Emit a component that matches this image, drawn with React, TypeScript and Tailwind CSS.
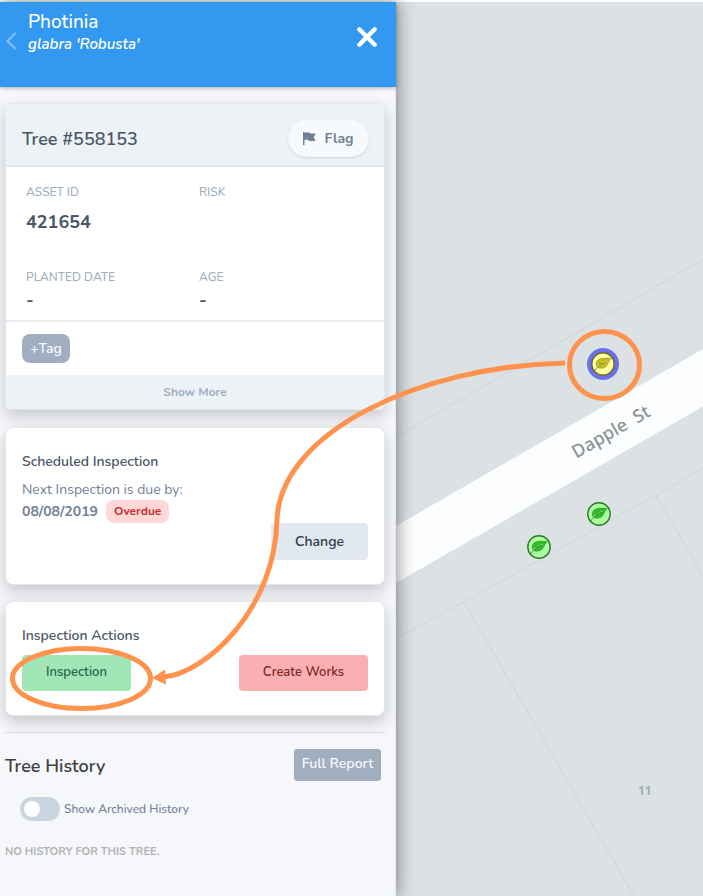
import React from "react";

interface FieldProps {
  label: string;
  value?: string;
  compact?: boolean;
}

const Field = ({ label, value, compact }: FieldProps) => (
  <div className="h-[85px]">
    <dt className="text-[12px] leading-[18px] font-medium text-[#a0aec0]">{label}</dt>
    <dd className={`text-[18px] leading-6 font-bold text-[#4a5568] ${compact ? "mt-0.5" : "mt-[9px]"}`}>{value}</dd>
  </div>
);

interface TreeMarkerProps {
  label: string;
  className: string;
  fill: string;
  stroke: string;
  leaf: string;
  selected?: boolean;
}

const TreeMarker = ({ label, className, fill, stroke, leaf, selected }: TreeMarkerProps) => (
  <button aria-label={label} className={`absolute cursor-pointer ${className}`}>
    <svg width="34" height="34" viewBox="-17 -17 34 34">
      {selected && <circle r="16" fill="#6b70ee" />}
      <circle r="11.2" fill={fill} stroke={stroke} strokeWidth="1.4" />
      <path d="M8.6 -5.8C5 -5.4 1 -6.6 -3 -5.2C-6.4 -3.8 -7.6 -0.8 -6.6 2.6C-5 0.6 -3.6 -0.4 -2 -1.2C-4 0.8 -5 2 -5.4 3.4C-3.6 4.8 0.6 4.8 3 2.6C5.4 0.4 5.4 -3.4 8.6 -5.8Z" fill={leaf} stroke={stroke} strokeOpacity="0.5" strokeWidth="0.6" />
      <path d="M-5.6 3C-3 0 0 -1.6 4 -2.8" fill="none" stroke={fill} strokeOpacity="0.8" strokeWidth="0.8" />
      <path d="M-8.4 7.6C-7.4 5.4 -6 3.4 -4.2 1.8C-2.4 0.2 0 -1 3 -1.8" fill="none" stroke={stroke} strokeOpacity="0.8" strokeWidth="0.9" />
    </svg>
  </button>
);

const TreeMap = () => (
  <section aria-label="Map" className="relative min-w-0 flex-1 overflow-hidden bg-[#dce1e4]">
    <svg className="absolute inset-0 h-full w-full" aria-hidden="true">
      <g transform="translate(-396 -2)">
        <path d="M396 526L996 180V238L396 583Z" fill="#fcfdfe" />
        <g fill="none" stroke="#d2d8db" strokeWidth="1.3">
          <path d="M396 437L996 90" />
          <path d="M396 638L464 602L656 495L996 302" />
          <path d="M464 602L634 896L752 1100" />
          <path d="M656 495L956 1015" />
        </g>
      </g>
    </svg>
    <span className="absolute top-[417px] left-[171px] -rotate-30 font-['Noto_Sans'] text-[18px] leading-6 font-medium whitespace-pre text-[#8b9395]">
      Dapple  St
    </span>
    <span className="absolute top-[781px] left-[242px] font-['Noto_Sans'] text-[12px] leading-4 font-bold text-[#9fb0b5]">
      11
    </span>
    <TreeMarker label="Tree 558153" className="top-[345px] left-[190px]" fill="#ffffa6" stroke="#6c6a1c" leaf="#c0bb1e" selected />
    <TreeMarker label="Tree" className="top-[495px] left-[186px]" fill="#adffa4" stroke="#2b7a2b" leaf="#2dbb26" />
    <TreeMarker label="Tree" className="top-[528px] left-[126px]" fill="#adffa4" stroke="#2b7a2b" leaf="#2dbb26" />
  </section>
);

const Guide = () => (
  <svg className="pointer-events-none absolute inset-0 z-20 h-full w-full" aria-hidden="true">
    <g fill="none" stroke="#ff924c" strokeWidth="5">
      <ellipse cx="604.5" cy="365" rx="35" ry="33.5" />
      <ellipse cx="81.5" cy="678.5" rx="69" ry="30" />
      <path d="M565 363C420 366 280 432 277 520C275 610 205 674 163 677" />
    </g>
    <path d="M152 678L165 669.5L166 684.5Z" fill="#ff924c" />
  </svg>
);

const App = () => {
  return (
    <main className="relative flex min-h-screen bg-white pt-0.5 font-['Nunito','Lato',sans-serif]">
      <aside className="relative z-10 w-[396px] shrink-0 border-r border-[#e8ebee] bg-[#f5f7fa] shadow-[2px_0_16px_rgba(0,0,0,0.4)]">
        {/* Header */}
        <header className="-mr-px flex h-[85px] items-start bg-[#3298f0] pr-[18px] pl-[5px] text-white shadow-[0_1px_4px_rgba(0,0,0,0.3)]">
          <button aria-label="Back" className="mt-[29px] w-[23px] cursor-pointer">
            <svg width="12" height="20" viewBox="0 0 12 20" fill="none" stroke="#7dbcf5" strokeWidth="2.4">
              <path d="M10.5 2L2.5 10L10.5 18" />
            </svg>
          </button>
          <div className="flex-1 pt-2">
            <h1 className="text-[19px] leading-6 font-medium">Photinia</h1>
            <p className="text-[15px] leading-5 font-semibold italic">glabra 'Robusta'</p>
          </div>
          <button aria-label="Close" className="mt-6 cursor-pointer">
            <svg width="22" height="22" viewBox="0 0 22 22" stroke="#fff" strokeWidth="4.4" strokeLinecap="round">
              <path d="M3.3 3.3L18.7 18.7M18.7 3.3L3.3 18.7" />
            </svg>
          </button>
        </header>

        <div className="flex flex-col pt-4 pr-[10px] pl-[5px]">
          {/* Tree details */}
          <section className="overflow-hidden rounded-md border border-[#e2e8ee] bg-white shadow-[0_6px_16px_rgba(0,0,0,0.2)]">
            <div className="flex h-[63px] items-center justify-between border-b-2 border-[#e2e6ea] bg-[#edf2f7] pt-2 pr-[15px] pl-4">
              <h2 className="text-[18px] leading-6 font-semibold text-[#4a5568]">Tree #558153</h2>
              <button className="flex h-[37px] w-[81px] cursor-pointer items-center justify-center gap-2 rounded-full bg-[#f7fafc] text-[14px] font-bold text-[#718096] shadow">
                <svg width="13" height="13" viewBox="0 0 13 13" fill="currentColor" aria-hidden="true">
                  <path d="M0 0H1.5V0.4H6.5L7.2 1.6H12.6L10.7 5.2L12.6 9H6L5.3 7.8H1.5V13H0Z" />
                </svg>
                Flag
              </button>
            </div>
            <dl className="grid h-[155px] grid-cols-[173px_1fr] border-b-2 border-[#e8ecf0] px-5 pt-4">
              <Field label="ASSET ID" value="421654" />
              <Field label="RISK" />
              <Field label="PLANTED DATE" value="-" compact />
              <Field label="AGE" value="-" compact />
            </dl>
            <div className="px-4 py-3">
              <button className="block h-[29px] w-12 cursor-pointer rounded-lg bg-[#a0aec0] text-[14px] font-semibold text-[#f7fafc]">
                +Tag
              </button>
            </div>
            <button className="block h-[34px] w-full cursor-pointer bg-[#edf2f7] text-[12px] font-bold text-[#a0aec0]">
              Show More
            </button>
          </section>

          {/* Scheduled inspection */}
          <section className="mt-[17px] h-[158px] rounded-lg border border-[#e2e8ee] bg-white px-4 pt-6 shadow-[0_6px_16px_rgba(0,0,0,0.2)]">
            <h3 className="text-[14px] leading-5 font-semibold text-[#4a5568]">Scheduled Inspection</h3>
            <p className="mt-2 text-[14px] leading-5 text-[#718096]">Next Inspection is due by:</p>
            <div className="flex items-center gap-2 text-[14px] leading-5 font-bold text-[#718096]">
              08/08/2019
              <span className="rounded-lg bg-[#fed7d7] px-2 text-[12px] leading-[23px] text-[#c53030]">Overdue</span>
            </div>
            <button className="ml-auto block h-[37px] w-[97px] cursor-pointer rounded bg-[#e2e8f0] text-[14px] font-semibold text-[#2d3748]">
              Change
            </button>
          </section>

          {/* Actions */}
          <section className="mt-4 h-[115px] rounded-lg border border-[#e2e8ee] bg-white px-4 pt-6 shadow-[0_6px_16px_rgba(0,0,0,0.2)]">
            <h3 className="text-[14px] leading-5 font-semibold text-[#4a5568]">Inspection Actions</h3>
            <div className="mt-[9px] flex justify-between">
              <button className="h-9 w-[109px] cursor-pointer rounded bg-[#a0e6b6] text-[13px] font-semibold text-[#276749]">
                Inspection
              </button>
              <button className="h-9 w-[129px] cursor-pointer rounded bg-[#fab0b2] text-[13px] font-semibold text-[#822727]">
                Create Works
              </button>
            </div>
          </section>

          {/* History */}
          <section className="mt-4 border-t border-[#d5d9dd] pt-4">
            <div className="flex items-center justify-between pr-1">
              <h2 className="pt-0.5 text-[18px] leading-7 font-semibold text-[#404040]">Tree History</h2>
              <button className="h-8 w-[87px] cursor-pointer rounded-[3px] bg-[#a0aec0] pb-1 text-[14px] font-semibold text-[#f7fafc]">
                Full Report
              </button>
            </div>
            <label className="mt-4 ml-[15px] flex w-fit cursor-pointer items-center gap-1 text-[12px] font-medium text-[#718096]">
              <input type="checkbox" className="peer sr-only" />
              <span className="h-6 w-10 rounded-full bg-[#cbd5e0] p-1 peer-checked:bg-[#4299e1] peer-checked:pl-5">
                <span className="block h-4 w-4 rounded-full bg-white" />
              </span>
              Show Archived History
            </label>
            <p className="mt-5 text-[11px] leading-[22px] font-bold text-[#b3b3b3]">NO HISTORY FOR THIS TREE.</p>
          </section>
        </div>
      </aside>

      <TreeMap />
      <Guide />
    </main>
  );
};

export default App;
